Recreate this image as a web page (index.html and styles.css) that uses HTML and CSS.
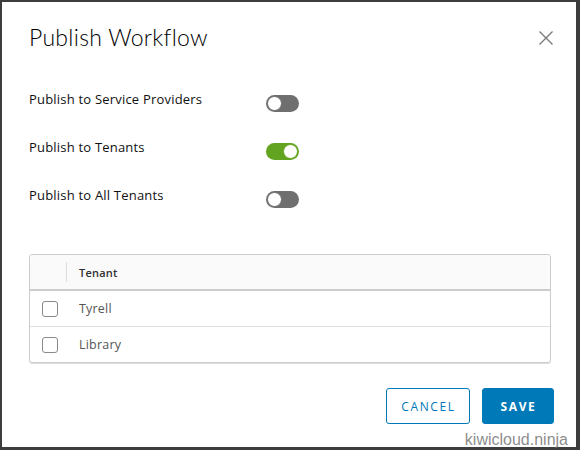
FILE: index.html
```html
<!DOCTYPE html>
<html>
<head>
<meta charset="utf-8">
<link rel="stylesheet" href="styles.css">
</head>
<body>
<div class="modal">
  <div class="header">
    <h1 class="title">Publish Workflow</h1>
    <svg class="close" width="16" height="16" viewBox="0 0 16 16"><path d="M1.5 1.5 L14.5 14.5 M14.5 1.5 L1.5 14.5" stroke="#777" stroke-width="1.3" fill="none"/></svg>
  </div>
  <div class="options">
    <div class="opt"><span class="label">Publish to Service Providers</span><span class="toggle"></span></div>
    <div class="opt"><span class="label">Publish to Tenants</span><span class="toggle on"></span></div>
    <div class="opt"><span class="label">Publish to All Tenants</span><span class="toggle"></span></div>
  </div>
  <div class="grid">
    <div class="grid-head">
      <div class="cell-sel"><span class="sep"></span></div>
      <div class="cell-name">Tenant</div>
    </div>
    <div class="grid-row">
      <div class="cell-sel"><span class="check"></span></div>
      <div class="cell-name">Tyrell</div>
    </div>
    <div class="grid-row last">
      <div class="cell-sel"><span class="check"></span></div>
      <div class="cell-name">Library</div>
    </div>
  </div>
  <div class="footer">
    <button class="btn btn-outline">CANCEL</button>
    <button class="btn btn-primary">SAVE</button>
  </div>
  <div class="watermark">kiwicloud.ninja</div>
</div>
</body>
</html>
```
FILE: styles.css
```css
html, body { margin: 0; padding: 0; }
body {
  background: #3d3d3d;
  width: 580px;
  height: 450px;
  overflow: hidden;
  font-family: "Open Sans", "Noto Sans", sans-serif;
}
.modal {
  position: relative;
  margin: 2px 4px 0 2px;
  height: 445px;
  background: #fff;
  box-sizing: border-box;
  padding: 0 27px 0 27px;
}
.header {
  display: flex;
  align-items: center;
  justify-content: space-between;
  height: 70px;
}
.title {
  margin: 0;
  font-family: "Lato", sans-serif;
  font-weight: 300;
  font-size: 23px;
  color: #000;
  letter-spacing: 0.3px;
}
.close { margin-right: -5px; margin-top: 2px; }
.options {
  display: flex;
  flex-direction: column;
  padding-top: 7px;
}
.opt {
  display: flex;
  align-items: center;
  height: 48px;
}
.label {
  width: 237px;
  font-size: 13px;
  letter-spacing: 0.2px;
  color: #111;
  margin-top: -8px;
}
.toggle {
  position: relative;
  width: 33px;
  height: 17px;
  border-radius: 9px;
  background: #6f6f6f;
  box-sizing: border-box;
}
.toggle::after {
  content: "";
  position: absolute;
  top: 1px;
  left: 1px;
  width: 15px;
  height: 15px;
  border-radius: 50%;
  background: #fff;
  box-sizing: border-box;
  border: 1px solid #6f6f6f;
}
.toggle.on { background: #62a420; }
.toggle.on::after { left: 17px; border-color: #62a420; }
.grid {
  margin-top: 31px;
  border: 1px solid #ccc;
  border-radius: 3px;
  width: 522px;
  box-sizing: border-box;
  box-shadow: 0 1px 0 #ddd;
}
.grid-head {
  display: flex;
  height: 34px;
  background: #fafafa;
  border-bottom: 2px solid #ccc;
  border-radius: 3px 3px 0 0;
}
.grid-row {
  display: flex;
  height: 35px;
  border-bottom: 1px solid #e0e0e0;
}
.grid-row.last { border-bottom: none; }
.cell-sel {
  width: 37px;
  display: flex;
  align-items: center;
  justify-content: flex-end;
  padding-left: 12px;
  box-sizing: border-box;
}
.grid-row .cell-sel { justify-content: flex-start; }
.sep {
  width: 1px;
  height: 20px;
  background: #ddd;
}
.check {
  width: 16px;
  height: 16px;
  border: 1px solid #8a8a8a;
  border-radius: 3px;
  box-sizing: border-box;
}
.cell-name {
  display: flex;
  align-items: center;
  padding-left: 12px;
  font-size: 12.5px;
  letter-spacing: 0.2px;
  color: #565656;
}
.grid-head .cell-name {
  font-size: 11px;
  font-weight: 600;
  color: #313131;
}
.footer {
  display: flex;
  justify-content: flex-end;
  gap: 12px;
  margin-top: 25px;
  margin-right: -5px;
}
.btn {
  height: 36px;
  border-radius: 3px;
  font-family: "Open Sans", sans-serif;
  font-size: 12px;
  letter-spacing: 1.6px;
  padding: 0 0 0 1px;
  box-sizing: border-box;
}
.btn-outline {
  width: 84px;
  background: #fff;
  border: 1px solid #0079b8;
  color: #0079b8;
  font-weight: 400;
}
.btn-primary {
  width: 72px;
  background: #0079b8;
  border: 1px solid #0079b8;
  color: #fff;
  font-weight: 700;
}
.watermark {
  position: absolute;
  right: 8px;
  bottom: -2px;
  font-family: "Liberation Sans", sans-serif;
  font-size: 16px;
  color: rgba(110, 110, 110, 0.8);
  line-height: 18px;
}
```
